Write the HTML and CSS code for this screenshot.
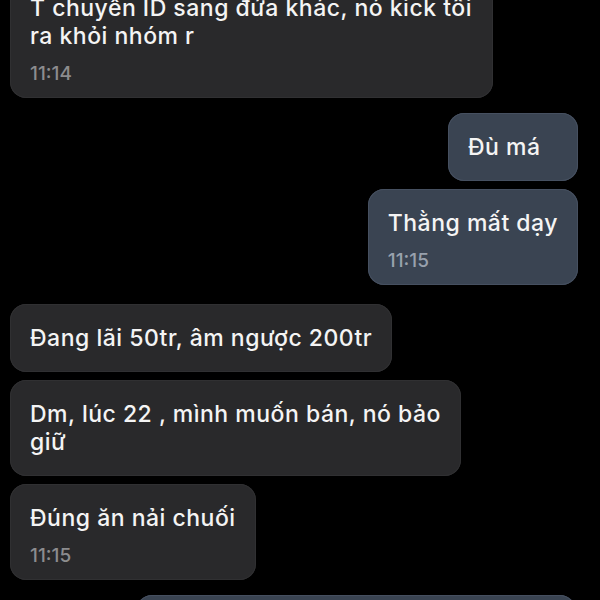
FILE: index.html
```html
<!DOCTYPE html>
<html lang="vi">
<head>
<meta charset="utf-8">
<title>Chat</title>
<link rel="stylesheet" href="styles.css">
</head>
<body>
<div class="chat">
  <div class="msg in wide">
    <div class="text">T chuyển ID sang đứa khác, nó kick tôi<br>ra khỏi nhóm r</div>
    <div class="time">11:14</div>
  </div>
  <div class="msg out gap-l short">
    <div class="text">Đù má</div>
  </div>
  <div class="msg out gap-s">
    <div class="text">Thằng mất dạy</div>
    <div class="time">11:15</div>
  </div>
  <div class="msg in gap-xl">
    <div class="text">Đang lãi 50tr, âm ngược 200tr</div>
  </div>
  <div class="msg in gap-s">
    <div class="text">Dm, lúc 22 , mình muốn bán, nó bảo<br>giữ</div>
  </div>
  <div class="msg in gap-s">
    <div class="text">Đúng ăn nải chuối</div>
    <div class="time">11:15</div>
  </div>
  <div class="msg out gap-m long">
    <div class="text">&nbsp;</div>
  </div>
</div>
</body>
</html>
```
FILE: styles.css
```css
html, body {
  margin: 0;
  padding: 0;
  background: #000;
}
body {
  width: 600px;
  height: 600px;
  overflow: hidden;
  font-family: Inter, "Liberation Sans", sans-serif;
  color: #f4f4f4;
}
.chat {
  display: flex;
  flex-direction: column;
  align-items: flex-start;
  margin-top: -26px;
  padding: 0 22px 0 10px;
}
.msg {
  box-sizing: border-box;
  padding: 20px;
  border-radius: 16px;
}
.msg.in {
  background: #29292b;
  box-shadow: inset 0 0 0 1px #303032;
}
.msg.out {
  align-self: flex-end;
  background: #3a4452;
  box-shadow: inset 0 0 0 1px #465060;
}
.msg:has(.time) {
  padding-bottom: 13px;
}
.text {
  font-size: 23px;
  font-weight: 500;
  letter-spacing: 0.5px;
  line-height: 28px;
  white-space: nowrap;
}
.time {
  margin-top: 13px;
  font-size: 19px;
  font-weight: 500;
  line-height: 22px;
  color: #8c8c8e;
}
.out .time {
  color: #98a1ad;
}
.wide { width: 483px; }
.short { min-width: 130px; }
.long { width: 440px; margin-right: 2px; }
.gap-s { margin-top: 8px; }
.gap-m { margin-top: 15px; }
.gap-l { margin-top: 15px; }
.gap-xl { margin-top: 19px; }
```
